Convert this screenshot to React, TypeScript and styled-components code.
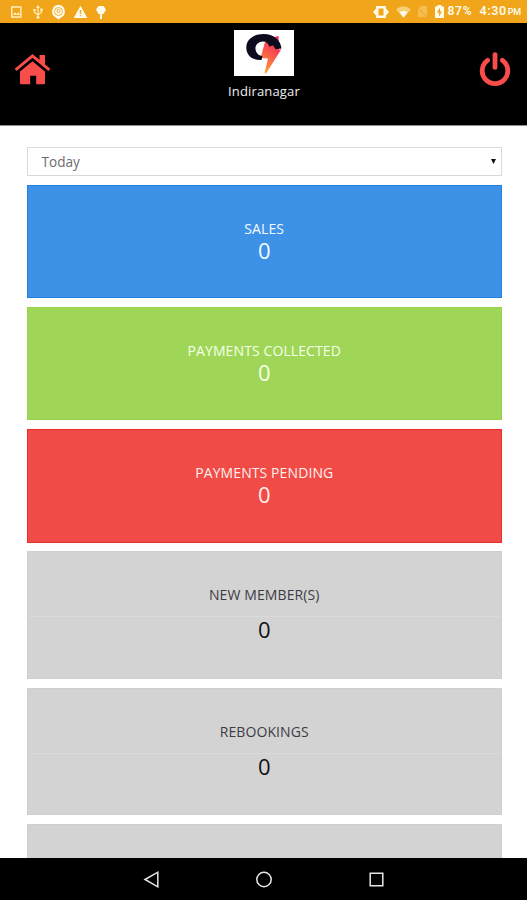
import React from "react";
import styled, { createGlobalStyle } from "styled-components";

const GlobalStyle = createGlobalStyle`
  * { box-sizing: border-box; }
  body { margin: 0; background: #fff; font-family: "Open Sans", "Noto Sans", sans-serif; }
`;

const Screen = styled.div`
  display: flex;
  flex-direction: column;
  height: 900px;
  overflow: hidden;
  background: #fefefe;
`;

const StatusBar = styled.div`
  display: flex;
  align-items: center;
  justify-content: space-between;
  flex: none;
  height: 23px;
  padding: 0 6px 0 9px;
  background: #f0a51b;
  color: #fffbe9;
  font-family: Roboto, sans-serif;
  font-weight: 600;
`;

const StatusIcons = styled.div`
  display: flex;
  align-items: center;
`;

const StatusIcon = styled.svg<{ $gap: number }>`
  display: block;
  flex: none;
  margin-right: ${(p) => p.$gap}px;
`;

const Battery = styled.span`
  width: 32px;
  font-size: 12px;
  line-height: 23px;
  letter-spacing: 0.7px;
`;

const Clock = styled.span`
  font-size: 12.5px;
  line-height: 23px;
  letter-spacing: 0.6px;
`;

const Meridiem = styled.span`
  margin-left: 1px;
  font-size: 9px;
  letter-spacing: -0.2px;
`;

const Header = styled.header`
  display: flex;
  justify-content: space-between;
  flex: none;
  height: 103px;
  padding: 0 14px 0 14px;
  background: #000;
  border-bottom: 1px solid #8d8a8a;
`;

const HeaderButton = styled.button`
  display: block;
  height: 36px;
  width: 37px;
  margin: 28px 0 0;
  padding: 0;
  border: 0;
  background: none;

  svg { display: block; }
`;

const Brand = styled.div`
  display: flex;
  flex-direction: column;
  align-items: center;
  padding: 7px 0 0 1px;
`;

const BrandName = styled.div`
  margin-top: 7px;
  color: #f0f0f0;
  font-size: 13px;
  line-height: 17px;
  letter-spacing: 0.15px;
`;

const Content = styled.main`
  display: flex;
  flex-direction: column;
  flex: 1;
  min-height: 0;
  gap: 8.9px;
  padding: 21px 25.5px 0 27px;
  overflow: hidden;
`;

const RangeSelect = styled.div`
  display: flex;
  align-items: center;
  justify-content: space-between;
  flex: none;
  height: 29px;
  padding: 0 5px 0 13.5px;
  border: 1px solid #d9d9d9;
  background: #fff;
  color: #6c6c6c;
  font-size: 13.6px;
  line-height: 27px;
`;

const Card = styled.section<{ $fill: string; $edge: string; $text: string; $height: number }>`
  flex: none;
  height: ${(p) => p.$height}px;
  padding: 33px 0 0;
  background: ${(p) => p.$fill};
  border: 1px solid ${(p) => p.$edge};
  color: ${(p) => p.$text};
  text-align: center;
`;

const CardTitle = styled.div`
  font-size: 14px;
  line-height: 20px;
  letter-spacing: 0.1px;
`;

const CardValue = styled.div<{ $ruled: boolean }>`
  margin: ${(p) => (p.$ruled ? "11px 1px 0" : "0 1px")};
  border-top: ${(p) => (p.$ruled ? "1px solid #dadada" : "0")};
  color: ${(p) => (p.$ruled ? "#111" : "inherit")};
  font-size: 22px;
  line-height: ${(p) => (p.$ruled ? 25 : 22)}px;
`;

const NavBar = styled.nav`
  display: flex;
  align-items: center;
  justify-content: space-between;
  flex: none;
  height: 42px;
  padding: 0 142px 0 143px;
  background: #000;
`;

const cards = [
  { title: "SALES", fill: "#3d91e7", edge: "#2283dc", text: "#f4faff" },
  { title: "PAYMENTS COLLECTED", fill: "#a0d658", edge: "#97d24a", text: "#f7ffe9" },
  { title: "PAYMENTS PENDING", fill: "#f14b47", edge: "#e92f2c", text: "#fff0ed" },
  { title: "NEW MEMBER(S)", fill: "#d3d3d3", edge: "#cfcfcf", text: "#3c3c43", ruled: true },
  { title: "REBOOKINGS", fill: "#d3d3d3", edge: "#cfcfcf", text: "#3c3c43", ruled: true },
  { title: "", fill: "#d3d3d3", edge: "#cfcfcf", text: "#3c3c43", ruled: true },
];

function HomeIcon() {
  return (
    <svg width="37" height="36" viewBox="0 0 37 36">
      <path fill="#f94d4b" d="M6 20.5 18.5 10.3 31 20.5V32a1.2 1.2 0 0 1-1.2 1.2h-7.6v-8.500h-6v8.500H7.2A1.2 1.2 0 0 1 6 32Z" />
      <path fill="none" stroke="#f94d4b" strokeWidth="2.9" d="M1.600 18.900 18.5 5 35.4 18.900" />
      <path fill="#f94d4b" d="M25.500 4h5.500v12L25.500 11.300Z" />
    </svg>
  );
}

function PowerIcon() {
  return (
    <svg width="37" height="36" viewBox="0 0 37 36">
      <g fill="none" stroke="#f94d4b" strokeWidth="4.8" strokeLinecap="round">
        <path d="M11.600 9.400a12.800 12.800 0 1 0 14.800 0" />
        <path d="M19 3.600v12.800" />
      </g>
    </svg>
  );
}

function Logo() {
  return (
    <svg width="60" height="46" viewBox="0 0 60 46">
      <defs>
        <linearGradient id="bolt" x1="0.7" y1="0" x2="0.3" y2="1">
          <stop offset="0" stopColor="#ee275f" />
          <stop offset="0.5" stopColor="#fb574b" />
          <stop offset="1" stopColor="#ffa23b" />
        </linearGradient>
      </defs>
      <path fill="#fff" d="M0 0h60v46H0z" />
      <path fill="url(#bolt)" d="M31 12 42 6.500 44.500 6 45 19.500h2.200L32 43.500 30.500 43 34 28.500l-7.500-.5Z" />
      <path fill="#0c0b1d" d="M27.500 30C18 30.500 12.300 25 12.300 17.500 12.300 9 20 4 29.500 4c10 0 17 5.500 18 14.500l-6 .8-2.500-4-3.500 1.500c-1-3.300-3-5.300-6.500-5.300-4.500 0-8 3.500-7.500 7.500.4 4 3 6.500 7 7.200Z" />
    </svg>
  );
}

export default function App() {
  return (
    <>
      <GlobalStyle />
      <Screen>
        <StatusBar>
          <StatusIcons>
            <StatusIcon $gap={9} width="14" height="16" viewBox="0 0 14 16">
              <path fill="none" stroke="#ffeeb8" strokeWidth="1.5" d="M2.8 3h9v10h-9z" />
              <path fill="#ffeeb8" d="m4 11 2-3 1.5 2L9.500 8 11 11Z" />
            </StatusIcon>
            <StatusIcon $gap={7} width="12" height="16" viewBox="0 0 12 16">
              <path fill="none" stroke="#ffeeb8" strokeWidth="1.2" d="M6 3v10M2.500 6v2.500L6 11l3.500-2.500V6" />
              <path fill="#ffeeb8" d="m6 1 2 3H4ZM1.300 5h2.500v2H1.300ZM8.200 4.500h2.500V7H8.200Z" />
              <circle cx="6" cy="13.200" r="1.500" fill="#ffeeb8" />
            </StatusIcon>
            <StatusIcon $gap={7} width="15" height="16" viewBox="0 0 15 16">
              <path fill="#fffbea" d="M7.500.8a6.700 6.700 0 0 1 3 12.500L7.500 15.500l-3-2.200A6.700 6.700 0 0 1 7.500.8Z" />
              <circle cx="7.500" cy="7.500" r="4" fill="none" stroke="#f2b23a" />
              <circle cx="7.500" cy="7" r="1.600" fill="none" stroke="#f2b23a" />
            </StatusIcon>
            <StatusIcon $gap={7} width="15" height="16" viewBox="0 0 15 16">
              <path fill="#fffbea" d="m7.500 1.800 6.800 12.200H.7Z" />
              <path fill="#f0ad2b" d="M6.800 6h1.400v4H6.800zM6.800 11h1.400v1.300H6.800z" />
            </StatusIcon>
            <StatusIcon $gap={0} width="12" height="16" viewBox="0 0 12 16">
              <path fill="#fffbea" d="M3.500 2h5L11 5.500 8.500 10H7v5H5v-5H3.500L1 5.500Z" />
            </StatusIcon>
          </StatusIcons>
          <StatusIcons>
            <StatusIcon $gap={7} width="16" height="16" viewBox="0 0 16 16">
              <path fill="#fffbea" d="M0 8l3-3.500v7ZM16 8l-3-3.500v7Z" />
              <path fill="none" stroke="#fffbea" strokeWidth="2.400" d="M4.300 3.200h7.400v9.600H4.300z" />
            </StatusIcon>
            <StatusIcon $gap={6} width="15" height="16" viewBox="0 0 15 16">
              <path fill="#f8cf75" d="M0 5.500Q7.500-.8 15 5.500L7.500 14Z" />
              <path fill="#fffbea" d="M3.500 8q4-2 8 0l-4 5.500Z" />
            </StatusIcon>
            <StatusIcon $gap={6} width="12" height="16" viewBox="0 0 12 16">
              <path fill="#f5bd52" d="M4 2h6v11H1V5Z" />
              <path stroke="#f0a51b" d="m0 3 11 11" />
            </StatusIcon>
            <StatusIcon $gap={4} width="9" height="16" viewBox="0 0 9 16">
              <path fill="#fffbea" d="M2.500 1h4v1.500H9V14H0V2.500h2.500Z" />
              <path fill="#f0a51b" d="M5 3.500 2 8.500h2v4l3-5H5Z" />
            </StatusIcon>
            <Battery>87%</Battery>
            <Clock>4:30<Meridiem>PM</Meridiem></Clock>
          </StatusIcons>
        </StatusBar>
        <Header>
          <HeaderButton aria-label="Home"><HomeIcon /></HeaderButton>
          <Brand>
            <Logo />
            <BrandName>Indiranagar</BrandName>
          </Brand>
          <HeaderButton aria-label="Log out"><PowerIcon /></HeaderButton>
        </Header>
        <Content>
          <RangeSelect>
            <span>Today</span>
            <svg width="5" height="5" viewBox="0 0 5 5"><path fill="#111" d="M0 0h5L2.500 5Z" /></svg>
          </RangeSelect>
          {cards.map((card) => (
            <Card
              key={card.title}
              $fill={card.fill}
              $edge={card.edge}
              $text={card.text}
              $height={card.ruled ? 127.3 : 113.3}
            >
              {card.title && (
                <>
                  <CardTitle>{card.title}</CardTitle>
                  <CardValue $ruled={!!card.ruled}>0</CardValue>
                </>
              )}
            </Card>
          ))}
        </Content>
        <NavBar>
          <svg width="17" height="18" viewBox="0 0 17 18"><path fill="none" stroke="#e6e6e6" strokeWidth="1.500" d="M2 9.500 14.800 2.200v14.600Z" /></svg>
          <svg width="18" height="18" viewBox="0 0 18 18"><circle cx="9" cy="9.500" r="7.200" fill="none" stroke="#e6e6e6" strokeWidth="1.500" /></svg>
          <svg width="17" height="18" viewBox="0 0 17 18"><path fill="none" stroke="#e6e6e6" strokeWidth="1.500" d="M2.200 3.200h12.600v12.600H2.200z" /></svg>
        </NavBar>
      </Screen>
    </>
  );
}
